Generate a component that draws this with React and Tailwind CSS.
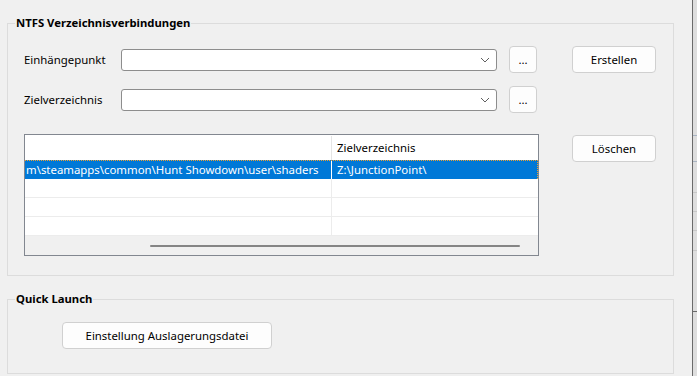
import React from 'react';

const font = { fontFamily: '"Segoe UI", "Noto Sans", "Open Sans", sans-serif' };

function WinButton({ children, className = '' }) {
  return (
    <button
      className={`h-[27px] rounded-[4px] border border-[#d0d0d0] bg-[#fdfdfd] text-[11.4px] leading-none text-black ${className}`}
    >
      {children}
    </button>
  );
}

function Combo() {
  return (
    <div className="h-[22px] w-[376px] rounded-[3px] border border-[#8d8d8d] bg-white flex items-center justify-end pr-[6px]">
      <svg width="10" height="6" viewBox="0 0 10 6" fill="none">
        <path d="M1 1 L5 5 L9 1" stroke="#606060" strokeWidth="1" />
      </svg>
    </div>
  );
}

function GroupTitle({ children }) {
  return (
    <div className="-mt-[9px] ml-[7px] w-fit bg-[#f0f0f0] px-[1px] text-[11.3px] font-bold leading-[16px] text-black">
      {children}
    </div>
  );
}

function ListRow({ selected, left, right }) {
  if (selected) {
    return (
      <div className="flex h-[19px] bg-[#0078d7] border-t border-r border-dotted border-t-[#f0a030] border-r-[#f0a030] text-white">
        <div className="w-[307px] overflow-hidden whitespace-nowrap pl-[1px] leading-[17px] border-r border-white">{left}</div>
        <div className="flex-1 pl-[5px] leading-[17px] whitespace-nowrap overflow-hidden">{right}</div>
      </div>
    );
  }
  return (
    <div className="flex h-[19px] border-b border-[#ececec]">
      <div className="w-[307px] border-r border-[#ececec]" />
      <div className="flex-1" />
    </div>
  );
}

export default function App() {
  return (
    <div className="flex h-[376px] w-[697px] overflow-hidden bg-[#f0f0f0] text-[11.4px]" style={font}>
      <div className="w-[692px]">
        {/* NTFS group */}
        <div className="ml-[7px] mt-[23px] h-[253px] w-[667px] border border-[#dcdcdc]">
          <GroupTitle>NTFS Verzeichnisverbindungen</GroupTitle>

          <div className="mt-[15px] flex h-[27px] items-center pl-[16px]">
            <div className="w-[97px]">Einhängepunkt</div>
            <Combo />
            <WinButton className="ml-[12px] w-[28px]">...</WinButton>
            <WinButton className="ml-[35px] w-[84px]">Erstellen</WinButton>
          </div>

          <div className="mt-[13px] flex h-[27px] items-center pl-[16px]">
            <div className="w-[97px]">Zielverzeichnis</div>
            <Combo />
            <WinButton className="ml-[12px] w-[28px]">...</WinButton>
          </div>

          <div className="mt-[21px] flex items-start pl-[16px]">
            <div className="flex h-[122px] w-[515px] flex-col border border-[#828790] bg-white">
              <div className="flex h-[25px]">
                <div className="w-[307px] border-r border-[#e5e5e5] mt-[1px]" />
                <div className="flex-1 pl-[5px] pt-[5px] leading-[16px]">Zielverzeichnis</div>
              </div>
              <ListRow
                selected
                left={'m\\steamapps\\common\\Hunt Showdown\\user\\shaders'}
                right={'Z:\\JunctionPoint\\'}
              />
              <ListRow />
              <ListRow />
              <ListRow />
              <div className="relative flex-1 bg-[#f0f0f0]">
                <div className="absolute left-[125px] top-[9px] h-[2px] w-[370px] rounded-full bg-[#858585]" />
              </div>
            </div>
            <WinButton className="ml-[33px] mt-[1px] w-[84px]">Löschen</WinButton>
          </div>
        </div>

        {/* Quick Launch group */}
        <div className="ml-[7px] mt-[23px] h-[75px] w-[667px] border border-[#dcdcdc]">
          <GroupTitle>Quick Launch</GroupTitle>
          <div className="mt-[15px] pl-[54px]">
            <WinButton className="w-[210px]">Einstellung Auslagerungsdatei</WinButton>
          </div>
        </div>
      </div>

      {/* neighbouring window edge */}
      <div className="flex flex-1 flex-col border-l border-[#6b6b6b] bg-[#dedede]">
        <div className="mt-[135px] h-px bg-[#a9b4c2]" />
        <div className="mt-[25px] h-px bg-[#a9b4c2]" />
        <div className="mt-[30px] h-px bg-[#c8c8c8]" />
        <div className="mt-[18px] h-px bg-[#c8c8c8]" />
        <div className="mt-[18px] h-px bg-[#c8c8c8]" />
        <div className="mt-[19px] h-px bg-[#c8c8c8]" />
        <div className="mt-[60px] h-px bg-[#6b6b6b]" />
      </div>
    </div>
  );
}
